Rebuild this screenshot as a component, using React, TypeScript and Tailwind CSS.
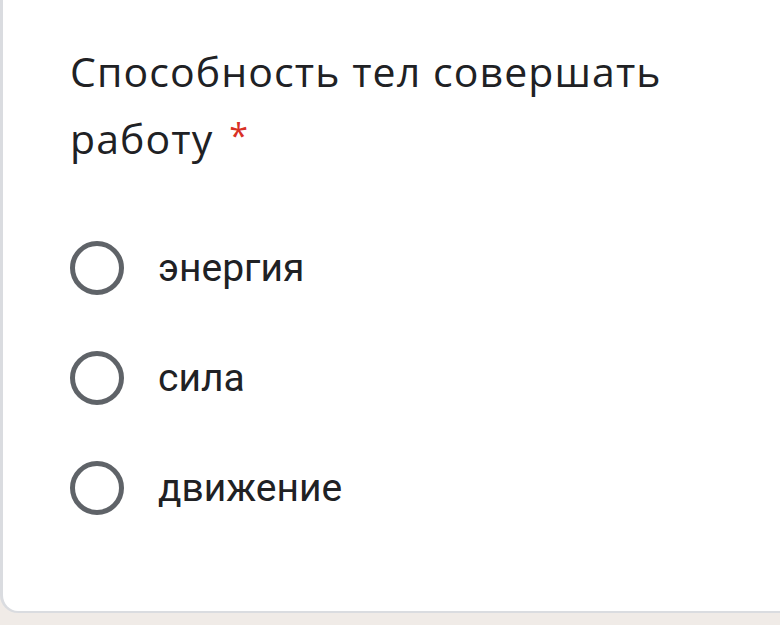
import React from "react";

const options = ["энергия", "сила", "движение"];

export default function App() {
  return (
    <div className="w-[780px] h-[625px] bg-[#f0ebe7] overflow-hidden">
      <div className="h-[613px] w-[800px] bg-white border-l-[3px] border-b-[2px] border-[#dadce0] rounded-bl-[18px] pl-[67px] pt-[38px]">
        <div
          className="text-[41px] leading-[67px] text-[#202124] tracking-[1.1px]"
          style={{ fontFamily: '"Open Sans", sans-serif' }}
        >
          Способность тел совершать
          <br />
          работу{" "}
          <span className="text-[#d93025] text-[34px] relative top-[-6px] ml-[4px]">*</span>
        </div>
        <div className="mt-[66px] flex flex-col gap-[56px]">
          {options.map((o) => (
            <div key={o} className="flex items-center h-[54px]">
              <div className="w-[54px] h-[54px] rounded-full border-[5px] border-[#5f6368] shrink-0" />
              <span
                className="ml-[34px] text-[39px] text-[#202124]"
                style={{ fontFamily: "Roboto, sans-serif" }}
              >
                {o}
              </span>
            </div>
          ))}
        </div>
      </div>
    </div>
  );
}
